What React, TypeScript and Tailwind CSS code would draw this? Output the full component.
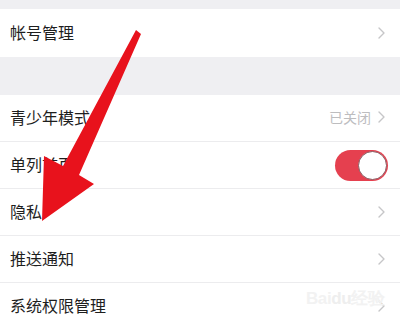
import { FC } from "react";

const Chevron: FC = () => (
    <svg width="9" height="14" viewBox="0 0 9 14" className="shrink-0">
        <polyline points="2,2 7,7 2,12" fill="none" stroke="#c6c6c8" strokeWidth="1.4" strokeLinecap="round" strokeLinejoin="round" />
    </svg>
);

const Row: FC<{ label: string; right?: React.ReactNode; divider?: boolean; h?: string }> = ({ label, right, divider = true, h = "h-[47px]" }) => (
    <div className={`bg-white ${h} flex items-center justify-between pl-[10px] pr-[14px] ${divider ? "border-b border-[#ececee]" : ""}`}>
        <span className="text-[16px] text-[#1e1e1e] pb-[3px]">{label}</span>
        {right ?? <Chevron />}
    </div>
);

export default function App() {
    return (
        <div className="relative w-[400px] h-[328px] overflow-hidden bg-[#efeff2] font-['Noto_Sans_CJK_SC','Noto_Sans',sans-serif]">
            <div className="h-[9px]" />
            <Row label="帐号管理" divider={false} h="h-[48px]" />
            <div className="h-[38px]" />
            <Row
                label="青少年模式"
                right={
                    <div className="flex items-center gap-[6px] pb-[2px]">
                        <span className="text-[14px] text-[#bdbdbf]">已关闭</span>
                        <Chevron />
                    </div>
                }
            />
            <Row
                label="单列首页"
                right={
                    <div className="w-[53px] h-[31px] rounded-full bg-[#e5404f] flex items-center justify-end pr-[1px] -mr-[2px]">
                        <div className="size-[29px] rounded-full bg-white border border-[#8a5a60]" />
                    </div>
                }
            />
            <Row label="隐私" />
            <Row label="推送通知" />
            <Row label="系统权限管理" divider={false} h="h-[46px]" />

            {/* watermark */}
            <div className="absolute left-[306px] top-[286px] text-[17px] font-bold text-[#f2f2f2] font-['Liberation_Sans',sans-serif] tracking-tight">
                Bai<span className="text-[#eeeeee]">du</span>经验
            </div>

            {/* red arrow overlay */}
            <svg className="absolute inset-0 pointer-events-none" width="400" height="328" viewBox="0 0 400 328">
                <polygon points="136,30 141,34 79,175 94,184 42,221 44,156 63,166" fill="#e8121c" />
            </svg>
        </div>
    );
}
